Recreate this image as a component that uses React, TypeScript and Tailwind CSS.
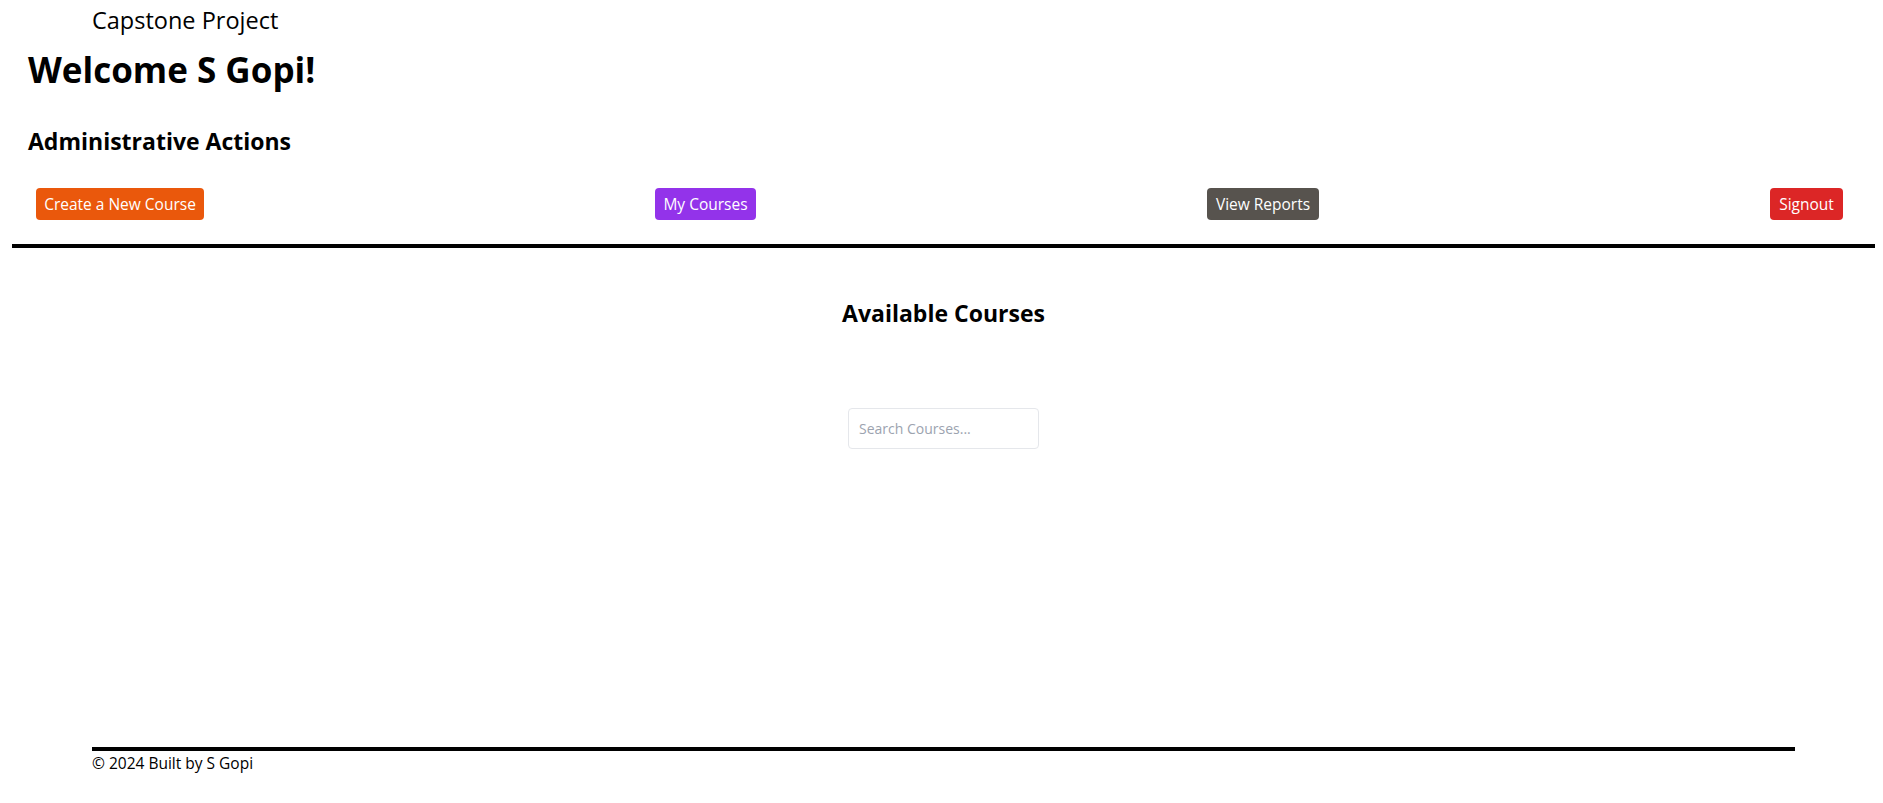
import React from 'react';

const actions = [
  { label: 'Create a New Course', cls: 'bg-[#ea580c] w-[168px]' },
  { label: 'My Courses', cls: 'bg-[#9333ea] w-[101px]' },
  { label: 'View Reports', cls: 'bg-[#57534e] w-[112px]' },
  { label: 'Signout', cls: 'bg-[#dc2626] w-[73px]' },
];

const App: React.FC = () => {
  return (
    <div className="min-h-screen flex flex-col bg-white text-black font-['Open_Sans',sans-serif]">
      <header className="pl-[92px] pt-[5px] text-[23.5px] leading-[30px]">Capstone Project</header>

      <main className="pl-3 pr-2">
        <div className="px-4">
          <h1 className="mt-[15px] text-[35px] leading-[40px] font-bold">Welcome S Gopi!</h1>
          <h2 className="mt-[35px] text-[23px] leading-8 font-bold">Administrative Actions</h2>
        </div>

        <div className="mt-[31px] flex items-center justify-between pl-6 pr-8">
          {actions.map((a) => (
            <button
              key={a.label}
              className={`${a.cls} h-8 rounded text-white text-[15.5px] leading-6 flex items-center justify-center`}
            >
              {a.label}
            </button>
          ))}
        </div>

        <div className="mt-6 border-t-4 border-black" />

        <h2 className="mt-[49px] text-center text-[23px] leading-8 font-bold">Available Courses</h2>

        <div className="mt-[79px] flex justify-center">
          <input
            type="text"
            placeholder="Search Courses..."
            className="w-[191px] h-[41px] px-[10px] border border-[#e5e7eb] rounded text-sm placeholder:text-[#9ca3af] outline-none"
          />
        </div>
      </main>

      <footer className="mt-auto ml-[92px] mr-[88px] mb-[28px] border-t-4 border-black text-[15.5px] leading-6">
        © 2024 Built by S Gopi
      </footer>
    </div>
  );
};

export default App;
